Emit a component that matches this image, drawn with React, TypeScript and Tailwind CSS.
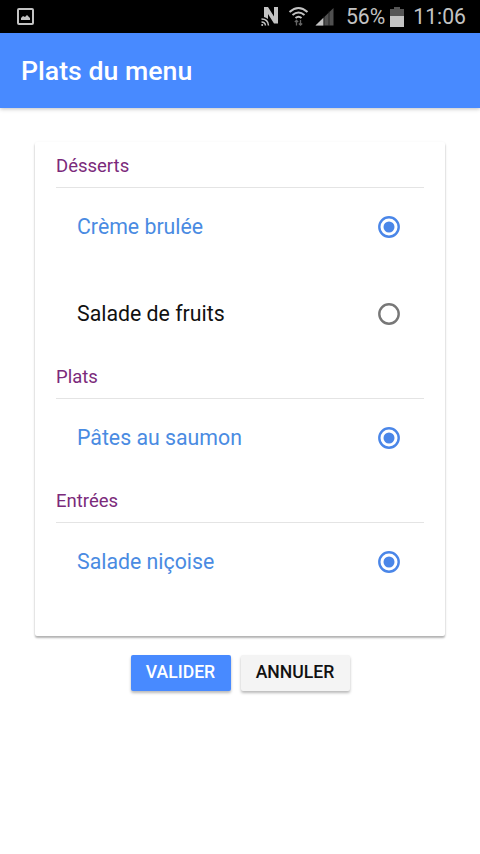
const GROUPS = [
    { title: "Désserts", dishes: [{ name: "Crème brulée", checked: true }, { name: "Salade de fruits", checked: false }] },
    { title: "Plats", dishes: [{ name: "Pâtes au saumon", checked: true }] },
    { title: "Entrées", dishes: [{ name: "Salade niçoise", checked: true }] },
];

function StatusBar() {
    return (
        <div className="flex h-[33px] items-center justify-between bg-black pl-[17px] pr-[14px] text-[#c3c3c3]">
            <svg width="17" height="17" viewBox="0 0 17 17" fill="none" stroke="currentColor" strokeWidth="2">
                <rect x="1" y="1" width="15" height="15" rx="1" />
                <path d="M4 12V10l2-2 2 1 2-2 3 3v2z" fill="currentColor" stroke="none" />
            </svg>
            <div className="flex items-center">
                {/* nfc, wifi, signal */}
                <svg width="74" height="24" viewBox="0 0 74 24" fill="none" stroke="currentColor">
                    <path d="M4 12V2h4l6 9.5V2h4v16.5h-4L8 9v5q-2-1.700-4-2z" fill="currentColor" stroke="none" />
                    <path d="M1.500 14q6.500 0 7 6.500M1.500 17q3.500 0 4 3.500" strokeWidth="1.500" />
                    <circle cx="2.200" cy="20" r="1" fill="currentColor" stroke="none" />
                    <path d="M29.500 7q9-8 18 0M32.500 10q6-5 12 0M35.500 13q3-2.500 6 0" strokeWidth="2" />
                    <path d="M36.500 20.500v-5M34.800 17l1.700-1.700 1.700 1.700M40.500 15v5M38.800 18.500l1.700 1.700 1.700-1.700" stroke="#666" strokeWidth="1.300" />
                    <path d="M55.500 20.500 73.500 3v17.500z" fill="#505050" stroke="none" />
                    <path d="M55.500 20.500l8-7.800v7.800z" fill="currentColor" stroke="none" />
                    <path d="M64 11v10M69 6v15" stroke="#161616" strokeWidth=".8" />
                </svg>
                <span className="ml-[12px] text-[21.2px] leading-6">56%</span>
                <svg className="ml-[5px]" width="14" height="20" viewBox="0 0 14 20">
                    <path d="M4 0h6v2h4v18H0V2h4z" fill="#555" />
                    <path d="M0 9h14v11H0z" fill="currentColor" />
                </svg>
                <span className="ml-[9px] text-[21.2px] leading-6">11:06</span>
            </div>
        </div>
    );
}

function Radio({ checked }: { checked: boolean }) {
    return (
        <svg width="22" height="22" viewBox="0 0 22 22" fill="none" className={checked ? "text-[#4a86e8]" : "text-[#777]"}>
            <circle cx="11" cy="11" r="9.7" stroke="currentColor" strokeWidth="2.4" />
            {checked && <circle cx="11" cy="11" r="5.5" fill="currentColor" />}
        </svg>
    );
}

export default function App() {
    return (
        <div className="h-[854px] w-[480px] bg-white font-['Roboto',sans-serif]">
            <StatusBar />
            <header className="flex h-[75px] items-center bg-[#488aff] pl-[21px] pt-[2px] text-[26.7px] font-medium text-white shadow-[0_1px_4px_rgba(0,0,0,0.25)]">
                Plats du menu
            </header>
            <main className="mx-[35px] mt-[34px] h-[494px] rounded-xs bg-white px-[21px] shadow-[0_2px_2px_rgba(0,0,0,0.25),0_1px_3px_rgba(0,0,0,0.1)]">
                {GROUPS.map((g) => (
                    <section key={g.title}>
                        <h2 className="flex h-[46px] items-center border-b border-[#e4e4e4] pt-[5px] text-[18.5px] text-[#7b2a7b]">{g.title}</h2>
                        <div className="flex flex-col gap-[9px]">
                            {g.dishes.map((d) => (
                                <div key={d.name} className="flex h-[78px] items-center justify-between pl-[21px] pr-[24px]">
                                    <span className={d.checked ? "text-[21.3px] text-[#4a8be2]" : "text-[21.3px] text-[#111]"}>{d.name}</span>
                                    <Radio checked={d.checked} />
                                </div>
                            ))}
                        </div>
                    </section>
                ))}
            </main>
            <div className="mt-[19px] flex justify-center gap-[10px] text-[17.6px] font-medium">
                <button className="h-[36px] w-[100px] rounded-xs bg-[#488aff] pb-px text-white shadow-[0_2px_3px_rgba(0,0,0,0.28)]">VALIDER</button>
                <button className="h-[36px] w-[109px] rounded-xs bg-[#f4f4f4] pb-px text-[#111] shadow-[0_2px_3px_rgba(0,0,0,0.28)]">ANNULER</button>
            </div>
        </div>
    );
}
